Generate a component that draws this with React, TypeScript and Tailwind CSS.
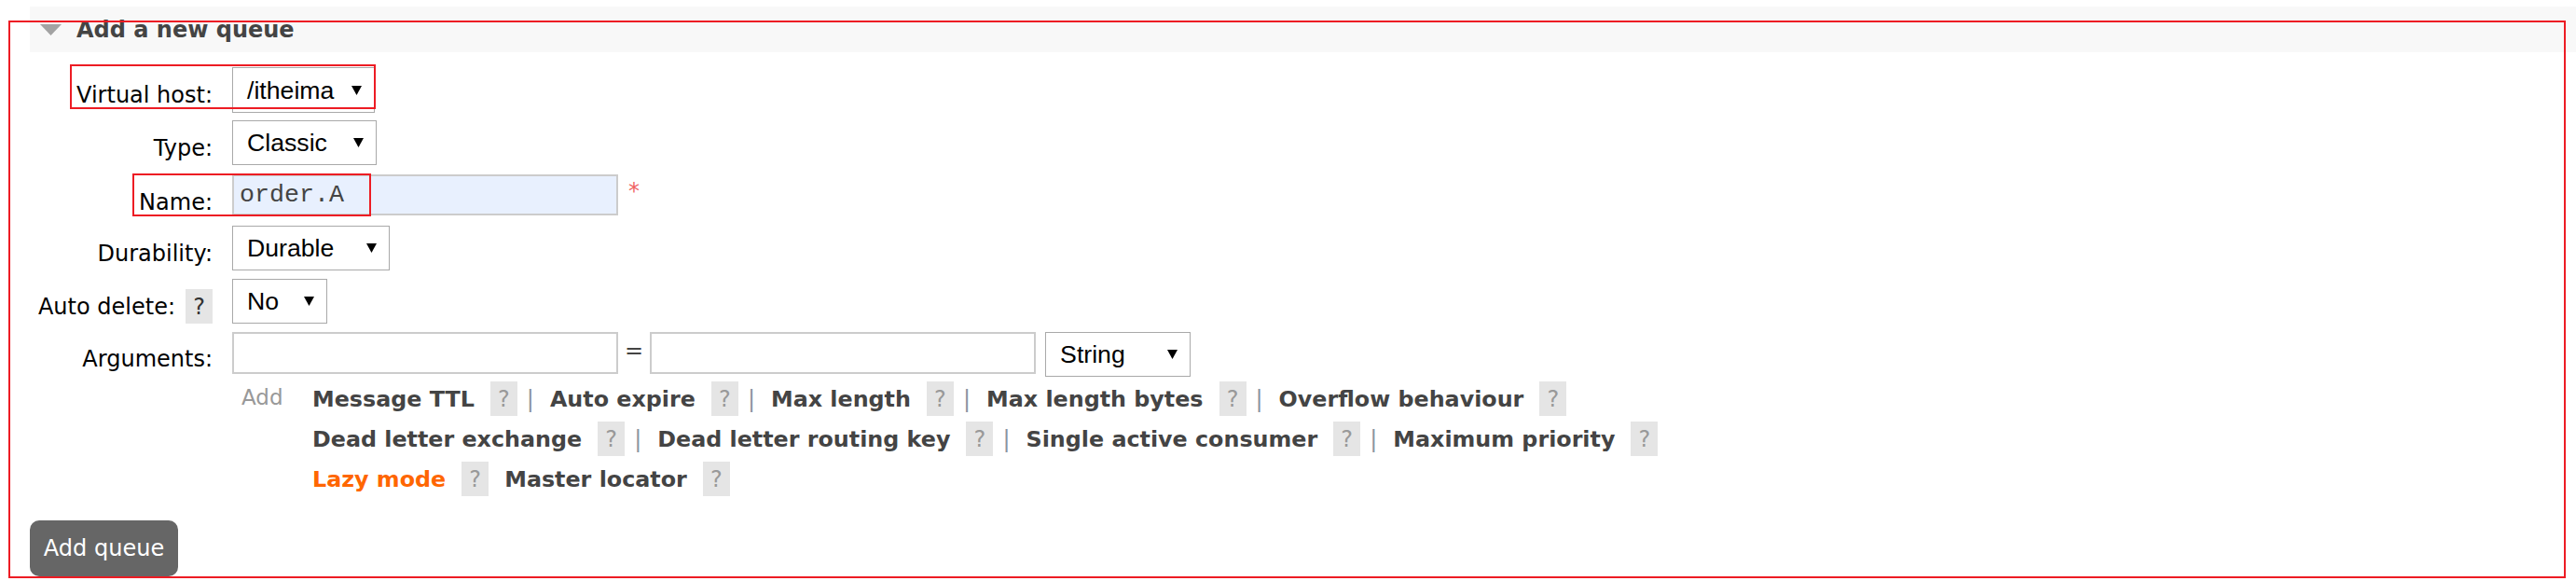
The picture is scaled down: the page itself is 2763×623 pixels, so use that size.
import type { ReactNode } from "react";

function Arrow() {
  return (
    <svg width="11" height="10" viewBox="0 0 11 10" className="shrink-0">
      <polygon points="0,0 11,0 5.5,10" fill="#000" />
    </svg>
  );
}

function FakeSelect({ value, className }: { value: string; className: string }) {
  return (
    <div
      className={`flex items-center justify-between border border-[#a9a9a9] bg-white pl-[15px] pr-[13px] font-['Liberation_Sans',Arial,sans-serif] text-[26.67px] text-black ${className}`}
    >
      <span>{value}</span>
      <Arrow />
    </div>
  );
}

function Help({ dark }: { dark?: boolean }) {
  return (
    <span
      className={`flex h-[37px] w-[29px] shrink-0 items-center justify-center bg-[#e5e5e5] text-[24px] ${
        dark ? "text-[#333]" : "text-[#999]"
      }`}
    >
      ?
    </span>
  );
}

function Row({
  label,
  labelClass,
  className,
  children,
}: {
  label: ReactNode;
  labelClass: string;
  className: string;
  children: ReactNode;
}) {
  return (
    <div className={`flex items-end ${className}`}>
      <div className={`flex w-[196px] items-end justify-end ${labelClass}`}>{label}</div>
      <div className="ml-[21px] flex items-start">{children}</div>
    </div>
  );
}

type Arg = { text: string; sep: boolean; orange?: boolean };

const argRows: Arg[][] = [
  [
    { text: "Message TTL", sep: true },
    { text: "Auto expire", sep: true },
    { text: "Max length", sep: true },
    { text: "Max length bytes", sep: true },
    { text: "Overflow behaviour", sep: false },
  ],
  [
    { text: "Dead letter exchange", sep: true },
    { text: "Dead letter routing key", sep: true },
    { text: "Single active consumer", sep: true },
    { text: "Maximum priority", sep: false },
  ],
  [
    { text: "Lazy mode", sep: false, orange: true },
    { text: "Master locator", sep: false },
  ],
];

export default function App() {
  return (
    <div className="relative h-[623px] w-full overflow-hidden bg-white font-['DejaVu_Sans',Verdana,sans-serif] text-[24px] leading-[28px] text-black">
      <div className="pl-[32px] pt-[7px]">
        <div className="flex h-[49px] items-center bg-[#f8f8f8]">
          <svg width="23" height="12" viewBox="0 0 23 12" className="ml-[11px]">
            <polygon points="0,0 23,0 11.5,12" fill="#a3a3a3" />
          </svg>
          <h2 className="ml-[16px] font-bold text-[#444]">Add a new queue</h2>
        </div>

        <div className="mt-[16px]">
          <Row label={<span>Virtual host:</span>} labelClass="pb-[5px]" className="">
            <FakeSelect value="/itheima" className="h-[49px] w-[153px]" />
          </Row>
          <Row label={<span>Type:</span>} labelClass="pb-[4px]" className="mt-[8px]">
            <FakeSelect value="Classic" className="h-[48px] w-[155px]" />
          </Row>
          <Row label={<span>Name:</span>} labelClass="pb-0" className="mt-[10px]">
            <div className="flex h-[44px] w-[414px] items-center border-2 border-[#ccc] bg-[#e8f0fe] pl-[6px] font-['Liberation_Mono','Courier_New',monospace] text-[26.67px] text-[#444]">
              order.A
            </div>
            <span className="ml-[11px] mt-[4px] text-[24px] text-[#f06464]">*</span>
          </Row>
          <Row label={<span>Durability:</span>} labelClass="pb-[4px]" className="mt-[11px]">
            <FakeSelect value="Durable" className="h-[48px] w-[169px]" />
          </Row>
          <Row
            label={
              <>
                <span className="pb-[4px]">Auto delete:</span>
                <span className="ml-[11px]">
                  <Help dark />
                </span>
              </>
            }
            labelClass=""
            className="mt-[9px]"
          >
            <FakeSelect value="No" className="h-[48px] w-[102px]" />
          </Row>
          <Row label={<span>Arguments:</span>} labelClass="pb-[5px]" className="mt-[9px]">
            <div className="h-[45px] w-[414px] border-2 border-[#ccc] bg-white" />
            <span className="mx-[7px] mt-[6px] text-[#444]">=</span>
            <div className="h-[45px] w-[414px] border-2 border-[#ccc] bg-white" />
            <FakeSelect value="String" className="ml-[10px] h-[48px] w-[156px]" />
          </Row>

          <div className="ml-[217px] mt-[5px] flex items-start">
            <span className="ml-[10px] mt-[3px] w-[76px] text-[23px] text-[#999]">Add</span>
            <div className="flex flex-col gap-[6px]">
              {argRows.map((row, i) => (
                <div key={i} className="flex h-[37px] items-center">
                  {row.map((a, j) => (
                    <div key={a.text} className={`flex items-center ${j > 0 && !row[j - 1].sep ? "ml-[17px]" : ""}`}>
                      <span className={`text-[23.8px] font-bold ${a.orange ? "text-[#ff6600]" : "text-[#444]"}`}>
                        {a.text}
                      </span>
                      <span className="ml-[17px]">
                        <Help />
                      </span>
                      {a.sep ? <span className="ml-[10px] mr-[17px] text-[#8a94a0]">|</span> : null}
                    </div>
                  ))}
                </div>
              ))}
            </div>
          </div>
        </div>

        <button className="mt-[26px] flex h-[60px] w-[159px] items-center justify-center rounded-[10px] bg-[#666] text-white">
          Add queue
        </button>
      </div>

      <div className="pointer-events-none absolute left-[9px] top-[22px] h-[598px] w-[2743px] border-2 border-[#ed1c24]" />
      <div className="pointer-events-none absolute left-[75px] top-[69px] h-[48px] w-[328px] border-2 border-[#ed1c24]" />
      <div className="pointer-events-none absolute left-[142px] top-[186px] h-[46px] w-[256px] border-2 border-[#ed1c24]" />
    </div>
  );
}
